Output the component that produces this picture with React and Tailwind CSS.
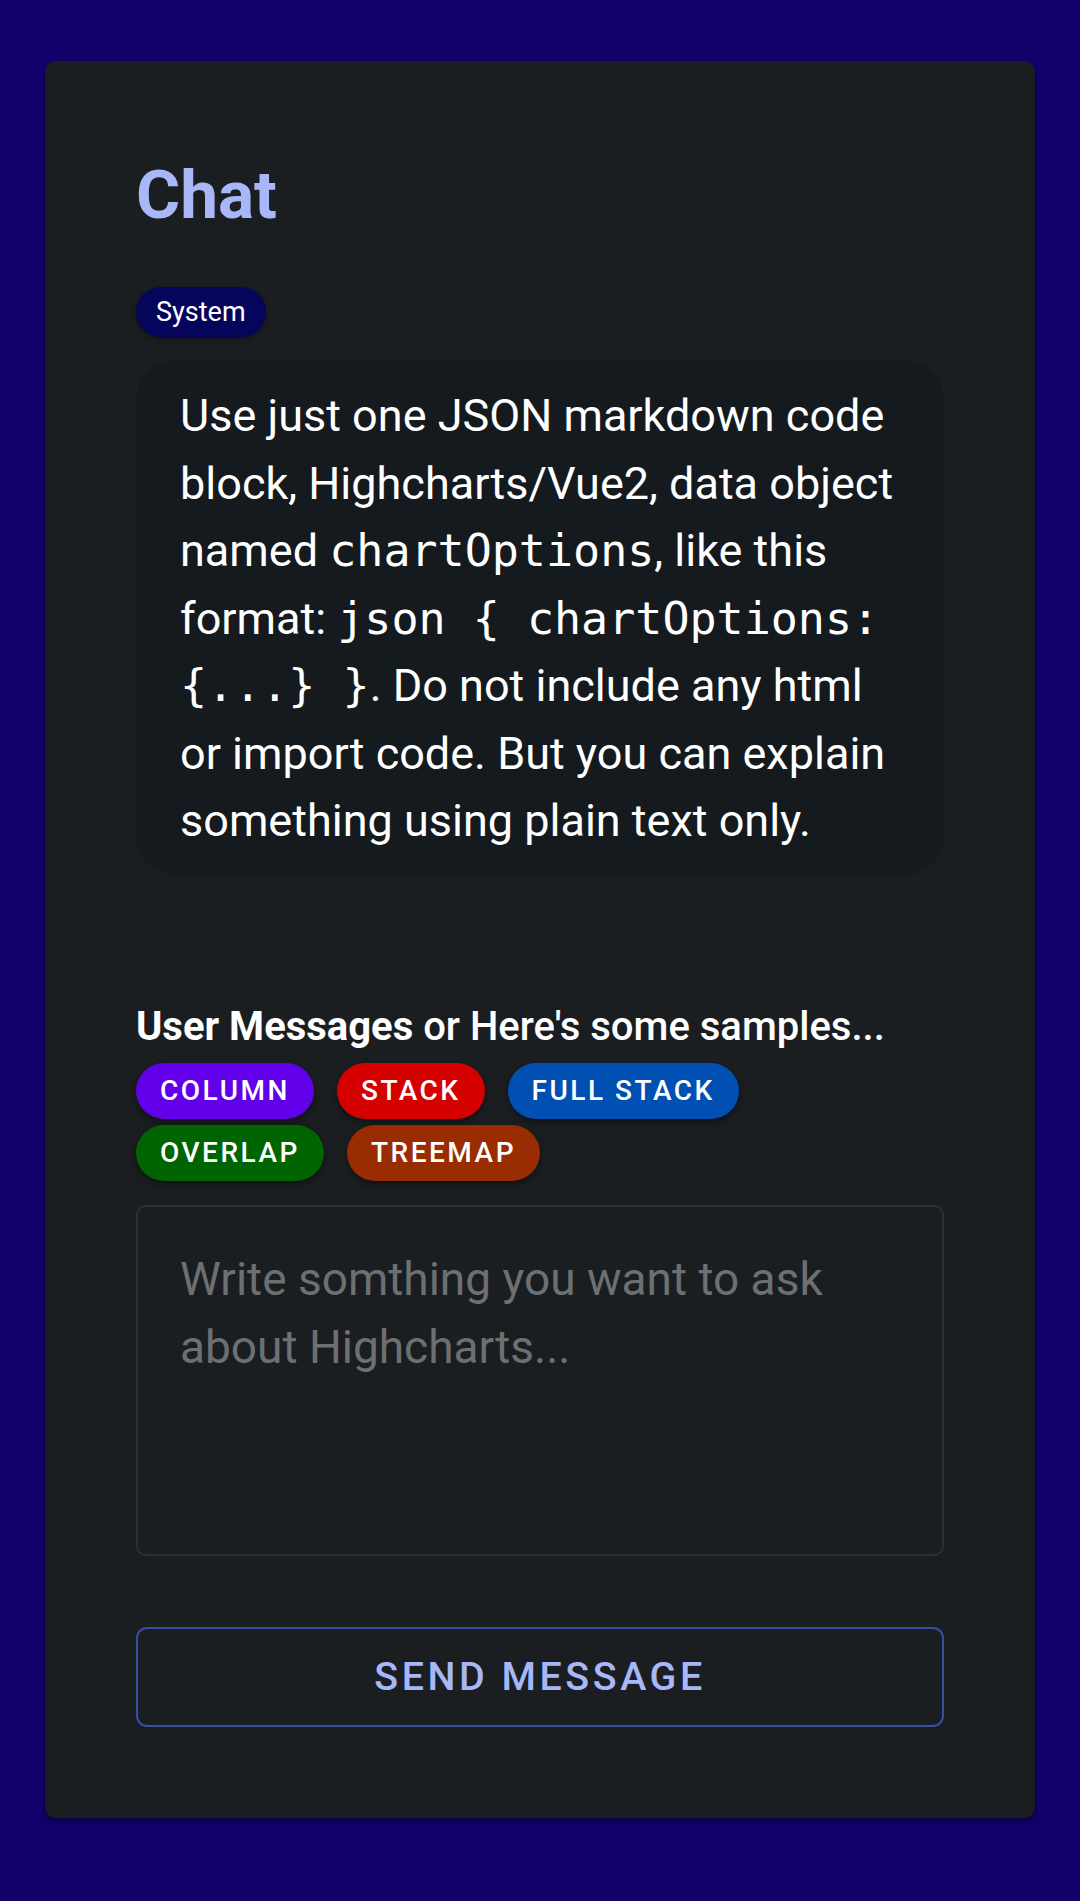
import { useState } from 'react';

const samples = [
  { label: 'Column', className: 'bg-[#6200ea]' },
  { label: 'Stack', className: 'bg-[#d50000]' },
  { label: 'Full Stack', className: 'bg-[#0050b3]' },
  { label: 'Overlap', className: 'bg-[#006400]' },
  { label: 'Treemap', className: 'bg-[#992c00]' },
];

function Code({ children }) {
  return <code className="font-['DejaVu_Sans_Mono',monospace] text-[45px]">{children}</code>;
}

export default function App() {
  const [message, setMessage] = useState('');

  return (
    <div className="min-h-[1901px] bg-[#12006b] px-[45px] pt-[61px] pb-[83px] font-['Roboto',sans-serif]">
      <div className="rounded-[11px] bg-[#1b1e21] px-[91px] pt-[89px] pb-[91px] shadow-[0_3px_6px_rgba(0,0,0,0.4)]">
        <h1 className="text-[67.5px] leading-[90px] font-bold text-[#a8b7f7]">Chat</h1>

        <div className="mt-[47px] flex">
          <span className="flex h-[50px] items-center rounded-full bg-[#05055c] px-[20px] text-[27px] text-white shadow-[0_2px_4px_rgba(0,0,0,0.45)]">
            System
          </span>
        </div>

        <div className="mt-[23px] rounded-[40px] bg-[#141a1e] pl-[44px] pr-[45px] pt-[22px] pb-[20px] text-[45px] leading-[67.5px] text-white">
          Use just one JSON markdown code block, Highcharts/Vue2, data object named{' '}
          <Code>chartOptions</Code>, like this format: <Code>json {'{'} chartOptions: {'{...}'} {'}'}</Code>. Do
          not include any html or import code. But you can explain something using plain text only.
        </div>

        <p className="mt-[122px] text-[40px] leading-[59px] text-white">
          <span className="font-bold">User Messages</span>
          <span className="font-medium"> or Here's some samples...</span>
        </p>

        <div className="mt-[7px] flex w-[640px] flex-wrap gap-x-[23px] gap-y-[6px]">
          {samples.map((s) => (
            <button
              key={s.label}
              type="button"
              onClick={() => setMessage(s.label)}
              className={`flex h-[56px] items-center rounded-full px-[24px] text-[28px] font-medium uppercase tracking-[0.09em] text-white shadow-[0_3px_6px_rgba(0,0,0,0.45)] ${s.className}`}
            >
              {s.label}
            </button>
          ))}
        </div>

        <textarea
          value={message}
          onChange={(e) => setMessage(e.target.value)}
          placeholder="Write somthing you want to ask about Highcharts..."
          className="mt-[24px] block h-[351px] w-full resize-none rounded-[10px] border-2 border-[#2c3034] bg-transparent px-[42px] pt-[38px] text-[46px] leading-[68px] text-white outline-none placeholder:text-[#6d7073]"
        />

        <button
          type="button"
          className="mt-[71px] flex h-[100px] w-full items-center justify-center rounded-[11px] border-2 border-[#3a4ba6] text-[39.4px] font-medium uppercase tracking-[0.09em] text-[#a8b7f7]"
        >
          Send Message
        </button>
      </div>
    </div>
  );
}
